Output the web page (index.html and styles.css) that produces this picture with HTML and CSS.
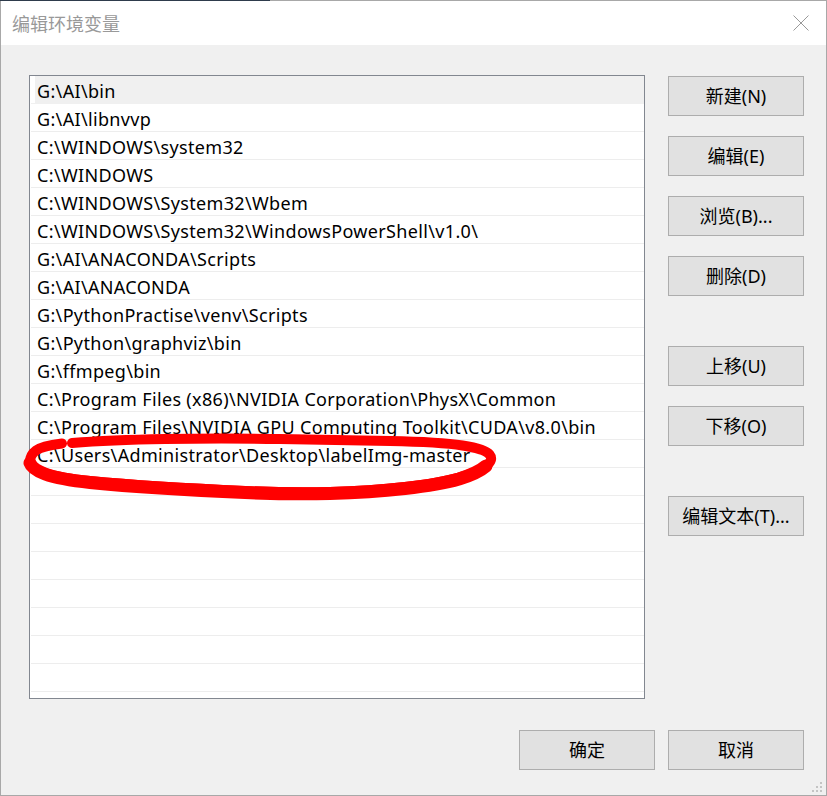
FILE: index.html
```html
<!DOCTYPE html>
<html lang="zh">
<head>
<meta charset="utf-8">
<title>编辑环境变量</title>
<link rel="stylesheet" href="styles.css">
</head>
<body>
<div class="window">
  <div class="topline"></div>
  <div class="titlebar">
    <span class="title">编辑环境变量</span>
    <svg class="close" width="16" height="16" viewBox="0 0 16 16"><path d="M0.5 0.5 L15.5 15.5 M15.5 0.5 L0.5 15.5" stroke="#999" stroke-width="1" fill="none"/></svg>
  </div>
  <div class="content">
    <div class="main">
      <div class="list">
        <div class="row selected">G:\AI\bin</div>
        <div class="row">G:\AI\libnvvp</div>
        <div class="row">C:\WINDOWS\system32</div>
        <div class="row">C:\WINDOWS</div>
        <div class="row">C:\WINDOWS\System32\Wbem</div>
        <div class="row">C:\WINDOWS\System32\WindowsPowerShell\v1.0\</div>
        <div class="row">G:\AI\ANACONDA\Scripts</div>
        <div class="row">G:\AI\ANACONDA</div>
        <div class="row">G:\PythonPractise\venv\Scripts</div>
        <div class="row">G:\Python\graphviz\bin</div>
        <div class="row">G:\ffmpeg\bin</div>
        <div class="row">C:\Program Files (x86)\NVIDIA Corporation\PhysX\Common</div>
        <div class="row">C:\Program Files\NVIDIA GPU Computing Toolkit\CUDA\v8.0\bin</div>
        <div class="row">C:\Users\Administrator\Desktop\labelImg-master</div>
        <div class="row"></div>
        <div class="row"></div>
        <div class="row"></div>
        <div class="row"></div>
        <div class="row"></div>
        <div class="row"></div>
        <div class="row"></div>
        <div class="row"></div>
      </div>
      <div class="side">
        <div class="group">
          <button class="btn">新建(N)</button>
          <button class="btn">编辑(E)</button>
          <button class="btn">浏览(B)...</button>
          <button class="btn">删除(D)</button>
        </div>
        <div class="group">
          <button class="btn">上移(U)</button>
          <button class="btn">下移(O)</button>
        </div>
        <div class="group">
          <button class="btn">编辑文本(T)...</button>
        </div>
      </div>
    </div>
    <div class="footer">
      <button class="btn">确定</button>
      <button class="btn">取消</button>
    </div>
  </div>
  <svg class="grip" width="12" height="12" viewBox="0 0 12 12">
    <rect x="9" y="1" width="2" height="2" fill="#c4c4c4"/>
    <rect x="5" y="5" width="2" height="2" fill="#c4c4c4"/>
    <rect x="9" y="5" width="2" height="2" fill="#c4c4c4"/>
    <rect x="1" y="9" width="2" height="2" fill="#c4c4c4"/>
    <rect x="5" y="9" width="2" height="2" fill="#c4c4c4"/>
    <rect x="9" y="9" width="2" height="2" fill="#c4c4c4"/>
  </svg>
  <svg class="mark" width="827" height="796" viewBox="0 0 827 796">
    <g fill="none" stroke="#ff0000" stroke-linecap="round" stroke-linejoin="round">
      <path d="M72 443 Q110 440 165 439 Q220 438 280 439 Q340 440 390 441 Q440 442 462.5 445.5 Q485 449 489.5 454.5 Q494 460 486 466 Q478 472 459 477.5 Q440 483 405 487 Q370 491 330 492 Q290 493 245 491 Q200 489 160 486.5 Q120 484 90 481 Q60 478 45 473 Q30 468 30 461.5 Q30 455 36 450.5 Q42 446 62 443.5" stroke-width="10"/>
      <path d="M486 466 Q478 473 459 479 Q440 484.5 405 488.5 Q370 492.5 330 493.5 Q290 494.5 245 492.5 Q200 490.5 160 488 Q120 485.5 90 482.5 Q60 479.5 45 474 Q32 469 30 463" stroke-width="13"/>
    </g>
  </svg>
</div>
</body>
</html>
```
FILE: styles.css
```css
html, body {
  margin: 0;
  padding: 0;
  background: #f0f0f0;
}
body {
  font-family: "Noto Sans", "Noto Sans CJK SC", sans-serif;
  width: 827px;
  height: 796px;
  overflow: hidden;
}
.window {
  position: relative;
  box-sizing: border-box;
  width: 827px;
  height: 796px;
  border-left: 1px solid #a8a8a8;
  border-right: 1px solid #a8a8a8;
  border-bottom: 1px solid #a8a8a8;
  background: #f0f0f0;
  display: flex;
  flex-direction: column;
}
.topline {
  height: 1px;
  margin-left: -1px;
  margin-right: -1px;
  background: linear-gradient(to right, #2e3b4c 0, #2e3b4c 270px, #a8a8a8 270px);
}
.titlebar {
  height: 44px;
  background: #fff;
  display: flex;
  align-items: center;
  justify-content: space-between;
  padding: 0 17px 0 11px;
}
.title {
  font-family: "Noto Sans CJK SC", sans-serif;
  font-size: 18px;
  color: #999;
  line-height: 1;
  margin-top: -1px;
}
.close {
  display: block;
  margin-top: -1px;
}
.content {
  padding: 30px 22px 0 28px;
}
.main {
  display: flex;
  gap: 23px;
}
.list {
  box-sizing: border-box;
  width: 616px;
  height: 624px;
  border: 1px solid #828790;
  background: #fff;
}
.row {
  box-sizing: border-box;
  height: 28px;
  margin-left: 1px;
  border-bottom: 1px solid #ededed;
  padding-left: 6px;
  font-size: 18px;
  letter-spacing: 0.34px;
  line-height: 30px;
  color: #000;
  white-space: nowrap;
  overflow: hidden;
}
.row.selected {
  background: linear-gradient(to right, #fff 0, #fff 4px, #f0f0f0 4px);
  border-bottom-color: #f0f0f0;
}
.side {
  display: flex;
  flex-direction: column;
  gap: 50px;
  padding-top: 1px;
}
.group {
  display: flex;
  flex-direction: column;
  gap: 20px;
}
.btn {
  box-sizing: border-box;
  width: 136px;
  height: 40px;
  margin: 0;
  padding: 0;
  background: #e1e1e1;
  border: 1px solid #adadad;
  border-radius: 0;
  font-family: "Noto Sans", "Noto Sans CJK SC", sans-serif;
  font-size: 18px;
  color: #000;
  line-height: 1;
}
.footer {
  display: flex;
  justify-content: flex-end;
  gap: 13px;
  margin-top: 31px;
}
.grip {
  position: absolute;
  right: 3px;
  bottom: 2px;
}
.mark {
  position: absolute;
  left: -1px;
  top: 0;
  pointer-events: none;
}
```
